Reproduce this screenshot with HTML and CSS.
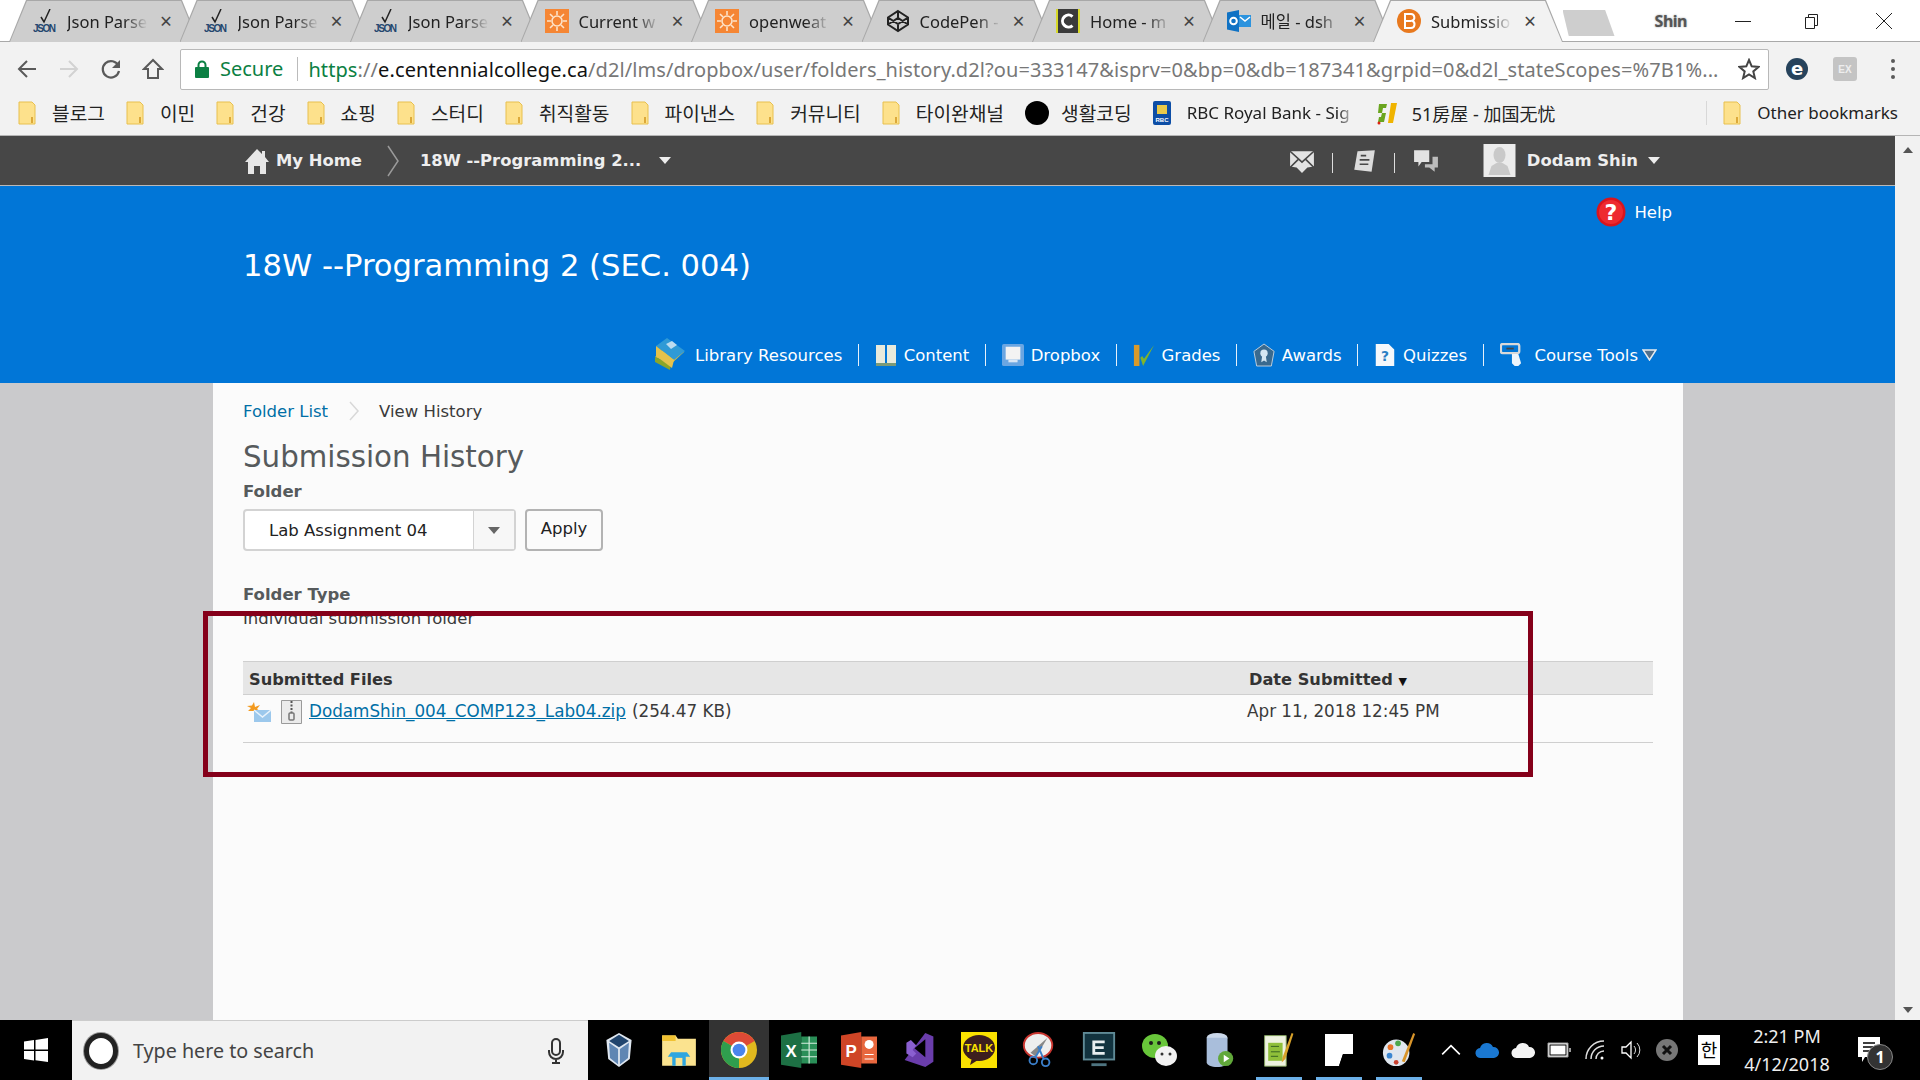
FILE: index.html
```html
<!DOCTYPE html>
<html lang="en">
<head>
    <meta charset="UTF-8">
    <title>Submission History</title>
    <link rel="stylesheet" href="styles.css">
</head>
<body>
    <svg class="sprite" xmlns="http://www.w3.org/2000/svg">
        <symbol id="i-folder" viewBox="0 0 18 24">
            <path d="M1 1h13l3 3v19H1z" fill="#fde18c" stroke="#e8c04f"/>
            <path d="M14 16v6" stroke="#dca93a" stroke-width="2"/>
        </symbol>
        <symbol id="i-json" viewBox="0 0 24 24">
            <path d="M8 8l3 5 6-13" fill="none" stroke="#222" stroke-width="1.500"/>
            <text x="0" y="23" font-size="10" font-weight="700" textLength="23" font-family="Liberation Sans" fill="#23466e">JSON</text>
        </symbol>
        <symbol id="i-sun" viewBox="0 0 24 24">
            <rect width="24" height="24" fill="#f58634"/>
            <circle cx="12" cy="12" r="5" fill="none" stroke="#fde3c8" stroke-width="1.600"/>
            <path d="M12 2v4M12 18v4M2 12h4M18 12h4M5 5l3 3M16 16l3 3M19 5l-3 3M8 16l-3 3" stroke="#fde3c8" stroke-width="1.600"/>
        </symbol>
    </svg>

    <div class="tabstrip">
        <div class="tab">
            <svg class="fav" viewBox="0 0 24 24"><use href="#i-json"/></svg>
            <span class="tab-title">Json Parse</span><span class="tab-x">×</span>
        </div>
        <div class="tab">
            <svg class="fav" viewBox="0 0 24 24"><use href="#i-json"/></svg>
            <span class="tab-title">Json Parse</span><span class="tab-x">×</span>
        </div>
        <div class="tab">
            <svg class="fav" viewBox="0 0 24 24"><use href="#i-json"/></svg>
            <span class="tab-title">Json Parse</span><span class="tab-x">×</span>
        </div>
        <div class="tab">
            <svg class="fav" viewBox="0 0 24 24"><use href="#i-sun"/></svg>
            <span class="tab-title">Current w</span><span class="tab-x">×</span>
        </div>
        <div class="tab">
            <svg class="fav" viewBox="0 0 24 24"><use href="#i-sun"/></svg>
            <span class="tab-title">openweat</span><span class="tab-x">×</span>
        </div>
        <div class="tab">
            <svg class="fav" viewBox="0 0 24 24"><path d="M12 2l10 6.500v7L12 22 2 15.500v-7zM2 8.500L12 15l10-6.500M2 15.500L12 9l10 6.500M12 2v7M12 15v7" fill="none" stroke="#222" stroke-width="2"/></svg>
            <span class="tab-title">CodePen -</span><span class="tab-x">×</span>
        </div>
        <div class="tab">
            <svg class="fav" viewBox="0 0 24 24"><rect width="24" height="24" fill="#3a3a3a"/><path d="M0 0h2v24H0zM22 0h2v24h-2z" fill="#d7d92a"/><path d="M16.500 7.500A6 6 0 1 0 16.500 16.500" fill="none" stroke="#fff" stroke-width="3"/></svg>
            <span class="tab-title">Home - m</span><span class="tab-x">×</span>
        </div>
        <div class="tab">
            <svg class="fav" viewBox="0 0 24 24"><path d="M12 1v22L0 20.500V3.500z" fill="#0f72c4"/><rect x="12" y="6" width="12" height="12" fill="#2c93de"/><path d="M13 8l5 4 5-4" fill="none" stroke="#fff" stroke-width="1.500"/><circle cx="6.500" cy="12" r="3.300" fill="none" stroke="#fff" stroke-width="2"/></svg>
            <span class="tab-title">메일 - dsh</span><span class="tab-x">×</span>
        </div>
        <div class="tab tab-active">
            <svg class="fav" viewBox="0 0 24 24"><circle cx="12" cy="12" r="12" fill="#e8791e"/><path d="M8 5h6a3.500 3.500 0 0 1 1 6.800A3.700 3.700 0 0 1 14 19H8zM8 12h6" fill="none" stroke="#fff" stroke-width="2"/></svg>
            <span class="tab-title">Submissio</span><span class="tab-x">×</span>
        </div>
        <div class="newtab"></div>
        <div class="window-controls">
            <span class="profile">Shin</span>
            <svg class="win-btn" viewBox="0 0 16 16"><path d="M0 8.500h16" stroke="#222"/></svg>
            <svg class="win-btn" viewBox="0 0 16 16"><path d="M1.500 4.500h9v11h-9zM4.500 4.500v-3h9v11h-3" fill="none" stroke="#222"/></svg>
            <svg class="win-btn" viewBox="0 0 16 16"><path d="M0 0l16 16M16 0L0 16" stroke="#222"/></svg>
        </div>
    </div>

    <div class="toolbar">
        <svg class="nav-icon" viewBox="0 0 22 22"><path d="M20 11H3M11 3l-8 8 8 8" fill="none" stroke="#5a5a5a" stroke-width="2"/></svg>
        <svg class="nav-icon" viewBox="0 0 22 22"><path d="M2 11h17M11 3l8 8-8 8" fill="none" stroke="#d2d2d2" stroke-width="2"/></svg>
        <svg class="nav-icon" viewBox="0 0 22 22"><path d="M18.500 8A8.200 8.200 0 1 0 19 13" fill="none" stroke="#5a5a5a" stroke-width="2.200"/><path d="M20 2v8h-8z" fill="#5a5a5a"/></svg>
        <svg class="nav-icon" viewBox="0 0 22 22"><path d="M11 2L2 11h4v9h10v-9h4z" fill="none" stroke="#5a5a5a" stroke-width="2"/></svg>
        <div class="omnibox">
            <svg class="lock" viewBox="0 0 14 18"><rect y="7" width="14" height="11" rx="1" fill="#0b8043"/><path d="M3.500 8V5a3.500 3.500 0 0 1 7 0v3" fill="none" stroke="#0b8043" stroke-width="2"/></svg>
            <span class="secure">Secure</span>
            <span class="url"><span class="url-green">https</span>://<span class="url-host">e.centennialcollege.ca</span>/d2l/lms/dropbox/user/folders_history.d2l?ou=333147&amp;isprv=0&amp;bp=0&amp;db=187341&amp;grpid=0&amp;d2l_stateScopes=%7B1%...</span>
            <svg class="star" viewBox="0 0 22 22"><path d="M11 2l2.700 6.300 6.800.6-5.200 4.500 1.600 6.700L11 16.500l-5.900 3.600 1.600-6.700L1.500 8.900l6.800-.6z" fill="none" stroke="#444" stroke-width="2"/></svg>
        </div>
        <svg class="ext" viewBox="0 0 24 24"><circle cx="12" cy="12" r="11" fill="#27435c"/><text x="12" y="18" text-anchor="middle" font-size="18" font-weight="700" font-family="DejaVu Sans" fill="#fff">e</text></svg>
        <svg class="ext" viewBox="0 0 24 24"><rect width="24" height="24" rx="3" fill="#c4c4c4"/><text x="12" y="16" text-anchor="middle" font-size="10" font-weight="700" font-family="Liberation Sans" fill="#eee">EX</text></svg>
        <svg class="ext" viewBox="0 0 24 24"><circle cx="12" cy="4" r="2" fill="#5a5a5a"/><circle cx="12" cy="12" r="2" fill="#5a5a5a"/><circle cx="12" cy="20" r="2" fill="#5a5a5a"/></svg>
    </div>

    <div class="bookmarks">
        <div class="bm bm-ko"><svg class="bm-icon"><use href="#i-folder"/></svg>블로그</div>
        <div class="bm bm-ko"><svg class="bm-icon"><use href="#i-folder"/></svg>이민</div>
        <div class="bm bm-ko"><svg class="bm-icon"><use href="#i-folder"/></svg>건강</div>
        <div class="bm bm-ko"><svg class="bm-icon"><use href="#i-folder"/></svg>쇼핑</div>
        <div class="bm bm-ko"><svg class="bm-icon"><use href="#i-folder"/></svg>스터디</div>
        <div class="bm bm-ko"><svg class="bm-icon"><use href="#i-folder"/></svg>취직활동</div>
        <div class="bm bm-ko"><svg class="bm-icon"><use href="#i-folder"/></svg>파이낸스</div>
        <div class="bm bm-ko"><svg class="bm-icon"><use href="#i-folder"/></svg>커뮤니티</div>
        <div class="bm bm-ko"><svg class="bm-icon"><use href="#i-folder"/></svg>타이완채널</div>
        <div class="bm bm-ko"><svg class="bm-icon bm-icon-round" viewBox="0 0 24 24"><circle cx="12" cy="12" r="12" fill="#000"/></svg>생활코딩</div>
        <div class="bm"><svg class="bm-icon" viewBox="0 0 18 24"><rect width="18" height="24" rx="2" fill="#0d4ea6"/><path d="M4 4h10v9H4z" fill="#e9c94a"/><text x="9" y="21" text-anchor="middle" font-size="6" font-weight="700" font-family="Liberation Sans" fill="#fff">RBC</text></svg><span class="bm-fade">RBC Royal Bank - Sig</span></div>
        <div class="bm bm-cn"><svg class="bm-icon bm-icon-round" viewBox="0 0 24 24"><path d="M3 3h8l-1 4H7l-1 5h4l-2 9H2l1-5h2l1-4H2z" fill="#6aa51f"/><path d="M15 2h6l-4 20h-5z" fill="#f0b400"/><circle cx="3" cy="22" r="1.500" fill="#d21"/></svg>51房屋 - 加国无忧</div>
        <div class="bm bm-other"><svg class="bm-icon"><use href="#i-folder"/></svg>Other bookmarks</div>
    </div>

    <div class="page">
        <div class="page-main">
            <div class="minibar">
                <div class="minibar-left">
                    <svg class="home-icon" viewBox="0 0 24 26"><path d="M12 1l5 5V3h3v6l4 5h-3v12h-6v-8H9v8H3V14H0z" fill="#e6e6e6"/></svg>
                    <span class="minibar-link">My Home</span>
                    <svg class="crumb-chevron" viewBox="0 0 14 32"><path d="M2 1l10 15L2 31" fill="none" stroke="#9a9a9a" stroke-width="1.500"/></svg>
                    <span class="minibar-link">18W --Programming 2...</span>
                    <span class="caret"></span>
                </div>
                <div class="minibar-right">
                    <svg class="mini-icon" viewBox="0 0 24 24"><path d="M1 3h22v14l-6 1-5 5-5-5-6-1z" fill="#e3e3e3"/><path d="M1 3l11 10L23 3M1 18l8-8M23 18l-8-8" fill="none" stroke="#474747" stroke-width="1.500"/></svg>
                    <span class="mini-sep"></span>
                    <svg class="mini-icon" viewBox="0 0 24 24"><path d="M6 3l16-1-3 20-16-2z" fill="#dcdcdc"/><path d="M9 7h5M8 11h9M8 15h8" stroke="#474747" stroke-width="1.500"/></svg>
                    <span class="mini-sep"></span>
                    <svg class="mini-icon" viewBox="0 0 24 24"><path d="M1 2h14v11H8l-3 4v-4H1z" fill="#e3e3e3"/><path d="M18 8h5v10h-3v4l-5-4h-4v-3h7z" fill="#bdbdbd"/></svg>
                    <div class="avatar"><svg viewBox="0 0 32 33"><rect width="32" height="33" fill="#ececec"/><ellipse cx="16" cy="11" rx="6" ry="8" fill="#c9c9c9"/><path d="M5 31l3-9 5-3h6l5 3 3 9z" fill="#c9c9c9"/></svg></div>
                    <span class="minibar-link user-name">Dodam Shin</span>
                    <span class="caret"></span>
                </div>
            </div>

            <div class="banner">
                <div class="help-row">
                    <svg class="help-icon" viewBox="0 0 30 30"><circle cx="15" cy="15" r="14.500" fill="#d9151d"/><circle cx="15" cy="15" r="12" fill="#ee2a2f"/><text x="15" y="23" text-anchor="middle" font-size="22" font-weight="700" font-family="DejaVu Sans" fill="#fff">?</text></svg>
                    <span>Help</span>
                </div>
                <h1 class="course-title">18W --Programming 2 (SEC. 004)</h1>
                <div class="course-nav">
                    <div class="nav-item">
                        <svg class="nav-img nav-img-lib" viewBox="0 0 34 36"><path d="M2 20l16 7 13-12-16-7z" fill="#e9bf2d"/><path d="M2 20v5l15 8 1-6z" fill="#8aa52a"/><path d="M3 9L14 1l18 13-11 9z" fill="#2f9ad6"/><path d="M3 9v10l16 12 2-8z" fill="#e4c24d"/><path d="M13 7l6-3 5 4-6 4z" fill="#bcdcf0"/></svg>
                        Library Resources
                    </div>
                    <div class="nav-item">
                        <svg class="nav-img" viewBox="0 0 22 24"><path d="M1 2h9v18H1zM12 2h9v18h-9z" fill="#e8eadc"/><path d="M1 20h20v3H1z" fill="#7b9a78"/></svg>
                        Content
                    </div>
                    <div class="nav-item">
                        <svg class="nav-img" viewBox="0 0 24 24"><rect width="24" height="24" rx="2" fill="#6aa6e2"/><rect x="4" y="3" width="16" height="14" fill="#f3f3f3"/><path d="M7 17h10v3H7z" fill="#d8e6f5"/></svg>
                        Dropbox
                    </div>
                    <div class="nav-item">
                        <svg class="nav-img" viewBox="0 0 24 24"><path d="M1 1h6v23H1z" fill="#d99a2b"/><path d="M8 15l3 9L23 1l-11 15-2-3z" fill="#7fb32e"/></svg>
                        Grades
                    </div>
                    <div class="nav-item">
                        <svg class="nav-img" viewBox="0 0 24 26"><path d="M12 1l11 8-3 16H4L1 9z" fill="#3a6a8f" stroke="#c9d4de"/><circle cx="12" cy="11" r="4" fill="#d5e7f3"/><path d="M10 14l-1 7 3-2 3 2-1-7z" fill="#d5e7f3"/></svg>
                        Awards
                    </div>
                    <div class="nav-item">
                        <svg class="nav-img" viewBox="0 0 22 26"><path d="M1 1h14l6 6v18H1z" fill="#f5f8fb"/><text x="11" y="20" text-anchor="middle" font-size="15" font-weight="700" font-family="DejaVu Sans" fill="#2b7fc4">?</text></svg>
                        Quizzes
                    </div>
                    <div class="nav-item nav-item-last">
                        <svg class="nav-img nav-img-tools" viewBox="0 0 24 26"><rect x="1" y="1" width="20" height="10" rx="2" fill="none" stroke="#d8d8d8" stroke-width="2.500"/><path d="M7 6h8" stroke="#444" stroke-width="2"/><path d="M13 12h7l3 10-3 3h-4l-3-3z" fill="#eef5fb"/></svg>
                        Course Tools
                        <svg class="tools-caret" viewBox="0 0 15 12"><path d="M1 1h13l-6.500 10z" fill="#50708c" stroke="#e8ecef" stroke-width="1.500"/></svg>
                    </div>
                </div>
            </div>

            <div class="backdrop">
                <div class="content">
                    <div class="crumbs">
                        <a class="link">Folder List</a>
                        <svg class="crumb-sep" viewBox="0 0 10 20"><path d="M1 1l8 9-8 9" fill="none" stroke="#d8d8d8" stroke-width="1.500"/></svg>
                        <span>View History</span>
                    </div>
                    <h2 class="page-title">Submission History</h2>
                    <div class="field-label">Folder</div>
                    <div class="folder-form">
                        <div class="select-box">
                            <span class="select-value">Lab Assignment 04</span>
                            <span class="select-arrow"><span class="select-caret"></span></span>
                        </div>
                        <div class="apply-btn">Apply</div>
                    </div>
                    <div class="field-label folder-type">Folder Type</div>
                    <div class="field-value">Individual submission folder</div>
                    <table class="files">
                        <tr>
                            <th class="col-file">Submitted Files</th>
                            <th>Date Submitted <span class="sort">▼</span></th>
                        </tr>
                        <tr>
                            <td>
                                <div class="file-cell">
                                    <svg class="file-icon" viewBox="0 0 24 20"><path d="M7 0l1 5 5-2-3 4 3 2H1l3-3-4-2 5-.5z" fill="#f39a1f"/><rect x="7" y="8" width="17" height="12" fill="#9cc8ec"/><path d="M7 8l8.500 7L24 8" fill="none" stroke="#e8f2fb" stroke-width="1.500"/></svg>
                                    <svg class="file-icon zip-icon" viewBox="0 0 21 24"><path d="M.5.500h20v23H.5z" fill="#ebebeb" stroke="#9a9a9a"/><path d="M10.500 1v12" stroke="#555" stroke-width="2" stroke-dasharray="2 1.500"/><rect x="8" y="13" width="5" height="7" rx="1" fill="none" stroke="#777" stroke-width="1.500"/></svg>
                                    <a class="link file-link">DodamShin_004_COMP123_Lab04.zip</a>
                                    <span class="file-size">(254.47 KB)</span>
                                </div>
                            </td>
                            <td class="date-cell">Apr 11, 2018 12:45 PM</td>
                        </tr>
                    </table>
                </div>
            </div>
        </div>
        <div class="scrollbar">
            <span class="scroll-up"></span>
            <span class="scroll-down"></span>
        </div>
        <div class="highlight-box"></div>
    </div>

    <div class="taskbar">
        <svg class="start" viewBox="0 0 24 24"><path d="M0 3.500l10-1.400V11.500H0zM11.500 1.900L24 0v11.500H11.500zM0 13h10v9.400L0 21zM11.500 13H24v11l-12.500-1.800z" fill="#fff"/></svg>
        <div class="search">
            <span class="cortana"></span>
            <span class="search-text">Type here to search</span>
            <svg class="mic" viewBox="0 0 16 26"><rect x="4" y="1" width="8" height="16" rx="4" fill="none" stroke="#333" stroke-width="2"/><path d="M1 12v2a7 7 0 0 0 14 0v-2M8 21v4M4 25h8" fill="none" stroke="#333" stroke-width="2"/></svg>
        </div>
        <div class="task-apps">
            <div class="app"><svg viewBox="0 0 32 40"><path d="M16 1l14 8-2 21-12 9-12-9L2 9z" fill="#dfe7f0"/><path d="M16 3l11 7-11 7-11-7z" fill="#21456e"/><path d="M5 12l10 7v17l-9-7zM27 12l-10 7v17l9-7z" fill="#5f86b3"/></svg></div>
            <div class="app"><svg viewBox="0 0 32 32"><path d="M1 3h12l2 3h16v24H1z" fill="#fbe38f"/><path d="M1 3h12v5H1z" fill="#f1c232"/><path d="M9 18h14l3 4h-4v8H10v-8H6z" fill="#2ea6e0"/><rect x="13" y="23" width="6" height="7" fill="#fbe38f"/></svg></div>
            <div class="app app-running app-active"><svg viewBox="0 0 34 34"><circle cx="17" cy="17" r="17" fill="#e0b81e"/><path d="M17 17L2.300 8.500A17 17 0 0 1 31.700 8.500z" fill="#dd4a36"/><path d="M17 17L2.300 8.500A17 17 0 0 0 17 34z" fill="#2f9e4e"/><circle cx="17" cy="17" r="8" fill="#fff"/><circle cx="17" cy="17" r="6" fill="#4a85ec"/></svg></div>
            <div class="app"><svg viewBox="0 0 32 32"><path d="M0 3l18-3v32L0 29z" fill="#1d7044"/><rect x="18" y="4" width="14" height="24" fill="#2a8f58"/><path d="M18 10h14M18 16h14M18 22h14M25 4v24" stroke="#d8eee0"/><text x="9" y="22" text-anchor="middle" font-size="15" font-weight="700" font-family="Liberation Sans" fill="#fff">X</text></svg></div>
            <div class="app"><svg viewBox="0 0 32 32"><path d="M0 3l18-3v32L0 29z" fill="#cf4526"/><rect x="18" y="4" width="14" height="24" fill="#e8673e"/><path d="M21 20h8M21 24h8" stroke="#fff"/><circle cx="25" cy="11" r="4" fill="#fff"/><text x="9" y="22" text-anchor="middle" font-size="15" font-weight="700" font-family="Liberation Sans" fill="#fff">P</text></svg></div>
            <div class="app"><svg viewBox="0 0 34 40"><path d="M24 1l9 4v28l-9 6-23-8z" fill="#6a3dab"/><path d="M24 8v20L12 18z" fill="#000"/><path d="M3 12l5-3 6 6-4 5 4 4-4 4-7-4z" fill="#8a5fd0"/></svg></div>
            <div class="app"><svg viewBox="0 0 36 36"><rect width="36" height="36" fill="#fae100"/><ellipse cx="18" cy="16" rx="16" ry="13" fill="#3c1e1e"/><path d="M11 26l-2 7 8-5z" fill="#3c1e1e"/><text x="18" y="20" text-anchor="middle" font-size="11" font-weight="700" font-family="Liberation Sans" fill="#fae100">TALK</text></svg></div>
            <div class="app"><svg viewBox="0 0 34 38"><ellipse cx="16" cy="14" rx="15" ry="13" fill="#eee" stroke="#c9352f" stroke-width="2"/><path d="M8 22L26 6l-12 20" fill="#888"/><circle cx="11" cy="30" r="4" fill="none" stroke="#3a7ec9" stroke-width="2"/><circle cx="24" cy="32" r="4" fill="none" stroke="#3a7ec9" stroke-width="2"/><path d="M13 27l7-12M22 29l-6-14" stroke="#3a7ec9" stroke-width="2"/></svg></div>
            <div class="app"><svg viewBox="0 0 34 38"><rect x="1" y="1" width="32" height="28" fill="#12333f" stroke="#5f8a96" stroke-width="2"/><path d="M10 9h13v3H13v3h9v3h-9v3h10v3H10z" fill="#e8eef0"/><path d="M9 33h16v3H9z" fill="#4e7480"/></svg></div>
            <div class="app"><svg viewBox="0 0 36 36"><ellipse cx="14" cy="14" rx="13" ry="12" fill="#68c63a"/><circle cx="10" cy="11" r="2" fill="#1c1c1c"/><circle cx="18" cy="11" r="2" fill="#1c1c1c"/><ellipse cx="25" cy="24" rx="11" ry="10" fill="#f2f2f2"/><circle cx="21" cy="22" r="1.500" fill="#333"/><circle cx="29" cy="22" r="1.500" fill="#333"/></svg></div>
            <div class="app"><svg viewBox="0 0 30 38"><ellipse cx="13" cy="6" rx="11" ry="5" fill="#cbd8ea"/><path d="M2 6v26c0 3 5 5 11 5s11-2 11-5V6z" fill="#a9bedb"/><circle cx="22" cy="28" r="8" fill="#61a83a"/><path d="M20 24l6 4-6 4z" fill="#fff"/></svg></div>
            <div class="app app-running"><svg viewBox="0 0 34 40"><path d="M1 4h24v34H1z" fill="#eef2e0" stroke="#86a65c"/><rect x="5" y="12" width="16" height="20" fill="#8fbf3a"/><path d="M8 16h9M8 22h10M8 27h8" stroke="#2f5a1f"/><path d="M31 1l2 1-9 28-4 4 1-6z" fill="#d9a32a"/></svg></div>
            <div class="app app-running"><svg class="sticky" viewBox="0 0 28 32"><rect width="28" height="32" fill="#fff"/><path d="M28 20v12H14l4-12z" fill="#000"/><path d="M18 20h10L14 32z" fill="#000"/></svg></div>
            <div class="app app-running"><svg viewBox="0 0 36 38"><ellipse cx="15" cy="22" rx="14" ry="14" fill="#dfe6ef"/><circle cx="9" cy="16" r="3" fill="#e8732a"/><circle cx="17" cy="12" r="3" fill="#4ca64c"/><circle cx="8" cy="25" r="3" fill="#3b86d1"/><circle cx="15" cy="32" r="2.500" fill="#c8402f"/><path d="M33 1l2 1-11 30-3-1z" fill="#d9952a"/></svg></div>
        </div>
        <div class="tray">
            <svg class="tray-icon" viewBox="0 0 20 20"><path d="M2 14l8-8 8 8" fill="none" stroke="#fff" stroke-width="1.500"/></svg>
            <svg class="tray-icon" viewBox="0 0 24 20"><path d="M6 18a5 5 0 0 1-1-10 7 7 0 0 1 13-1 5.500 5.500 0 0 1 1 11z" fill="#1a78d2"/></svg>
            <svg class="tray-icon" viewBox="0 0 24 20"><path d="M6 18a5 5 0 0 1-1-10 7 7 0 0 1 13-1 5.500 5.500 0 0 1 1 11z" fill="#f3f3f3"/></svg>
            <svg class="tray-icon" viewBox="0 0 24 20"><path d="M1 3h20v14H1z" fill="#fff" stroke="#999"/><rect x="3" y="5" width="16" height="10" fill="#fff" stroke="#000"/><path d="M22 8h2v4h-2z" fill="#999"/></svg>
            <svg class="tray-icon" viewBox="0 0 22 22"><path d="M2 20A18 18 0 0 1 20 2M7 20A13 13 0 0 1 20 7M12 20a8 8 0 0 1 8-8" fill="none" stroke="#ddd" stroke-width="1.500"/><circle cx="18" cy="19" r="1.500" fill="#fff"/></svg>
            <svg class="tray-icon" viewBox="0 0 22 22"><path d="M2 8h4l5-5v16l-5-5H2z" fill="none" stroke="#fff" stroke-width="1.300"/><path d="M14 7a6 6 0 0 1 0 8M17 4a10 10 0 0 1 0 14" fill="none" stroke="#ddd"/></svg>
            <svg class="tray-icon" viewBox="0 0 22 22"><circle cx="11" cy="11" r="11" fill="#777"/><path d="M7 7l8 8M15 7l-8 8" stroke="#111" stroke-width="3"/></svg>
            <span class="ime">한</span>
            <div class="clock"><span>2:21 PM</span><span>4/12/2018</span></div>
            <div class="notif">
                <svg viewBox="0 0 24 28"><path d="M1 1h22v20H8l-3 5v-5H1z" fill="#fff"/><path d="M6 7h12M6 11h12M6 15h8" stroke="#000" stroke-width="1.300"/></svg>
                <span class="notif-badge">1</span>
            </div>
        </div>
    </div>
</body>
</html>
```
FILE: styles.css
```css
* {
    box-sizing: border-box;
}
html, body {
    height: 100%;
}
body {
    margin: 0;
    display: flex;
    flex-direction: column;
    height: 1080px;
    overflow: hidden;
    background: #fff;
    font-family: "DejaVu Sans", Verdana, sans-serif;
    color: #3a3a3a;
}
.sprite {
    display: none;
}

/* browser chrome */
.tabstrip {
    height: 42px;
    display: flex;
    padding-left: 9px;
    background: #fff;
    font-family: "Noto Sans", "Noto Sans CJK KR", sans-serif;
    font-size: 16.5px;
    position: relative;
}
.tabstrip::after {
    content: "";
    position: absolute;
    left: 0;
    right: 0;
    bottom: 0;
    height: 1px;
    background: #a9a9a9;
}
.tab {
    position: relative;
    flex: none;
    width: 190px;
    margin-right: -19.5px;
    display: flex;
    align-items: center;
    padding: 0 0 0 24px;
    background: #a8a8a8;
    clip-path: polygon(0 100%, 17px 0, calc(100% - 17px) 0, 100% 100%);
    z-index: 1;
}
.tab::before {
    content: "";
    position: absolute;
    inset: 1px 0 0 0;
    background: #cecece;
    clip-path: polygon(1px 100%, 18px 0, calc(100% - 18px) 0, calc(100% - 1px) 100%);
}
.tab > * {
    position: relative;
}
.tab-active {
    z-index: 2;
}
.tab-active::before {
    background: #f2f2f2;
}
.fav {
    flex: none;
    width: 24px;
    height: 24px;
    margin-right: 10px;
}
.tab-title {
    flex: none;
    width: 81px;
    white-space: nowrap;
    overflow: hidden;
    color: #222;
    -webkit-mask-image: linear-gradient(90deg, #000 70%, transparent 100%);
    mask-image: linear-gradient(90deg, #000 70%, transparent 100%);
}
.tab-x {
    margin-left: 12px;
    font-size: 21px;
    line-height: 1;
    color: #444;
}
.newtab {
    width: 52px;
    height: 26px;
    margin: 10px 0 0 19px;
    flex: none;
    background: #cecece;
    clip-path: polygon(0 0, 82% 0, 100% 100%, 12% 100%);
}
.window-controls {
    margin-left: auto;
    display: flex;
    align-items: center;
    height: 41px;
    padding-right: 28px;
}
.profile {
    margin-right: 48px;
    font-weight: 700;
    font-size: 16px;
    letter-spacing: -0.5px;
    color: #555;
    text-shadow: 0 0 2px #999;
}
.win-btn {
    width: 16px;
    height: 16px;
    margin-left: 53px;
}
.win-btn:first-of-type {
    margin-left: 0;
}
.win-btn:last-child {
    margin-left: 56px;
}

.toolbar {
    height: 54px;
    display: flex;
    align-items: center;
    background: #f2f2f2;
    padding-left: 16px;
}
.nav-icon {
    flex: none;
    width: 22px;
    height: 22px;
    margin-right: 20px;
}
.omnibox {
    flex: none;
    width: 1589px;
    height: 41px;
    margin-left: -4px;
    margin-right: 16px;
    display: flex;
    align-items: center;
    background: #fff;
    border: 1px solid #b8b8b8;
    border-radius: 2px;
    padding-left: 14px;
    font-family: "Noto Sans", sans-serif;
    font-size: 20px;
}
.lock {
    width: 14px;
    height: 18px;
    margin-right: 11px;
}
.secure {
    color: #0b8043;
    padding-right: 14px;
    margin-right: 10px;
    border-right: 1px solid #bbb;
    line-height: 24px;
    font-size: 20px;
}
.url {
    color: #777;
    white-space: nowrap;
    overflow: hidden;
    flex: 1;
    letter-spacing: 0.1px;
}
.url-green {
    color: #0b8043;
}
.url-host {
    color: #111;
}
.star {
    width: 22px;
    height: 22px;
    margin: 0 8px 0 10px;
    flex: none;
}
.ext {
    flex: none;
    width: 24px;
    height: 24px;
    margin-right: 24px;
}

.bookmarks {
    height: 40px;
    display: flex;
    align-items: center;
    background: #f2f2f2;
    padding: 0 0 6px 18px;
    font-family: "Noto Sans", "Noto Sans CJK KR", sans-serif;
    font-size: 17px;
    color: #222;
    border-bottom: 1px solid #b5b5b5;
}
.bm {
    display: flex;
    align-items: center;
    margin-right: 21px;
    white-space: nowrap;
}
.bm-ko {
    font-size: 19.2px;
}
.bm-cn {
    font-size: 18px;
}
.bm-icon {
    flex: none;
    width: 18px;
    height: 24px;
    margin-right: 16px;
}
.bm-icon-round {
    width: 24px;
    margin-right: 12px;
}
.bm-fade {
    width: 168px;
    overflow: hidden;
    -webkit-mask-image: linear-gradient(90deg, #000 90%, transparent 100%);
    mask-image: linear-gradient(90deg, #000 90%, transparent 100%);
}
.bm-other {
    margin-left: auto;
    margin-right: 22px;
    padding-left: 16px;
    border-left: 1px solid #d8d8d8;
}

/* page */
.page {
    flex: 1;
    display: flex;
    min-height: 0;
    position: relative;
}
.page-main {
    flex: 1;
    display: flex;
    flex-direction: column;
    min-width: 0;
}
.scrollbar {
    flex: none;
    width: 25px;
    background: #f1f1f1;
    display: flex;
    flex-direction: column;
    justify-content: space-between;
    align-items: center;
    padding: 11px 0 7px;
}
.scroll-up {
    border: 5px solid transparent;
    border-top: 0;
    border-bottom: 6px solid #555;
}
.scroll-down {
    border: 5px solid transparent;
    border-bottom: 0;
    border-top: 6px solid #555;
}

.minibar {
    height: 50px;
    display: flex;
    align-items: center;
    justify-content: space-between;
    background: #474747;
    border-bottom: 1px solid #b9b9b9;
    padding: 0 235px 0 245px;
}
.minibar-left, .minibar-right {
    display: flex;
    align-items: center;
}
.minibar-link {
    font-weight: 700;
    font-size: 16.4px;
    color: #eee;
    white-space: nowrap;
}
.home-icon {
    width: 24px;
    height: 26px;
    margin-right: 7px;
}
.crumb-chevron {
    width: 14px;
    height: 32px;
    margin: 0 20px 0 24px;
}
.caret {
    width: 0;
    height: 0;
    margin-left: 18px;
    border: 6px solid transparent;
    border-bottom: 0;
    border-top: 7px solid #eee;
}
.minibar-right .caret {
    margin-left: 10px;
}
.mini-icon {
    width: 26px;
    height: 26px;
}
.mini-sep {
    width: 1px;
    height: 20px;
    background: #ddd;
    margin: 4px 18px 0 17px;
}
.avatar {
    width: 33px;
    height: 33px;
    margin: 0 11px 0 44px;
}
.avatar svg {
    display: block;
    width: 100%;
    height: 100%;
}

.banner {
    height: 197px;
    flex: none;
    display: flex;
    flex-direction: column;
    background: #0176d7;
    color: #fff;
    padding: 11px 223px 0 243px;
}
.help-row {
    display: flex;
    justify-content: flex-end;
    align-items: center;
    gap: 8px;
    height: 30px;
    font-size: 16.5px;
}
.help-icon {
    width: 30px;
    height: 30px;
}
.course-title {
    margin: 19px 0 0;
    font-size: 30.6px;
    font-weight: 400;
    line-height: 40px;
}
.course-nav {
    margin-top: auto;
    margin-right: 15px;
    height: 56px;
    display: flex;
    justify-content: flex-end;
    align-items: center;
    font-size: 16.5px;
    white-space: nowrap;
}
.nav-item {
    display: flex;
    align-items: center;
    height: 22px;
    padding: 0 15.7px;
    border-right: 1px solid #e6f0fa;
}
.nav-item-last {
    border-right: 0;
    padding-right: 0;
}
.nav-img {
    width: 22px;
    height: 24px;
    margin-right: 7px;
    flex: none;
}
.nav-img-lib {
    width: 36px;
    height: 36px;
}
.nav-img-tools {
    margin-right: 13px;
}
.tools-caret {
    width: 15px;
    height: 12px;
    margin-left: 4px;
}

.backdrop {
    flex: 1;
    display: flex;
    background: #cacacc;
    padding-left: 213px;
    min-height: 0;
}
.content {
    width: 1470px;
    background: #fbfbfb;
    padding: 18px 30px 0;
    font-size: 16.5px;
}
.crumbs {
    display: flex;
    align-items: center;
    height: 20px;
}
.crumb-sep {
    width: 10px;
    height: 20px;
    margin: 0 20px 0 21px;
}
.link {
    color: #006fa6;
}
.page-title {
    margin: 16px 0 0;
    font-size: 29.3px;
    font-weight: 400;
    line-height: 40px;
    color: #565a5c;
}
.field-label {
    margin-top: 5px;
    line-height: 20px;
    font-weight: 700;
    color: #565a5c;
}
.folder-form {
    display: flex;
    margin-top: 7px;
    height: 42px;
    color: #222;
}
.select-box {
    width: 273px;
    display: flex;
    background: #fff;
    border: 2px solid #d3d3d3;
    border-radius: 4px;
}
.select-value {
    flex: 1;
    padding-left: 24px;
    line-height: 40px;
}
.select-arrow {
    width: 41px;
    display: flex;
    align-items: center;
    justify-content: center;
    background: #f7f7f7;
    border-left: 1px solid #d3d3d3;
}
.select-caret {
    border: 6px solid transparent;
    border-bottom: 0;
    border-top: 7px solid #666;
}
.apply-btn {
    width: 78px;
    margin-left: 9px;
    text-align: center;
    line-height: 36px;
    background: #fbfbfb;
    border: 2px solid #b3b3b3;
    border-radius: 4px;
}
.folder-form + .folder-type {
    margin-top: 34px;
}
.field-value {
    margin-top: 4px;
    line-height: 20px;
}
.files {
    width: 1410px;
    margin-top: 32px;
    border-collapse: collapse;
    table-layout: fixed;
}
.files th {
    height: 33px;
    padding: 2px 0 0 6px;
    text-align: left;
    font-size: 16.2px;
    background: #e6e6e6;
    border-top: 1px solid #cfcfcf;
    border-bottom: 1px solid #cfcfcf;
    color: #333;
}
.col-file {
    width: 1000px;
}
.sort {
    font-size: 11px;
    color: #111;
}
.files td {
    height: 48px;
    padding: 4px 0 0;
    vertical-align: top;
    font-size: 16.8px;
    line-height: 24px;
    border-bottom: 1px solid #cfcfcf;
}
.file-cell {
    display: flex;
    align-items: flex-start;
    padding-left: 4px;
    white-space: nowrap;
}
.file-icon {
    flex: none;
    width: 24px;
    height: 20px;
    margin: 3px 10px 0 0;
}
.zip-icon {
    width: 21px;
    height: 24px;
    margin: 1px 7px 0 0;
}
.file-link {
    text-decoration: underline;
}
.file-size {
    margin-left: 6px;
}
.files .date-cell {
    padding-left: 4px;
}

/* annotation drawn on top of the screenshot */
.highlight-box {
    position: absolute;
    left: 203px;
    top: 475px;
    width: 1330px;
    height: 166px;
    border: 5px solid #85001a;
    pointer-events: none;
}

/* windows taskbar */
.taskbar {
    flex: none;
    height: 60px;
    display: flex;
    align-items: center;
    background: #000;
    font-family: "Noto Sans", "Noto Sans CJK KR", sans-serif;
}
.start {
    flex: none;
    width: 24px;
    height: 24px;
    margin: 0 24px;
}
.search {
    flex: none;
    width: 516px;
    height: 60px;
    display: flex;
    align-items: center;
    background: #f2f2f2;
    padding-left: 12px;
    border-top: 1px solid #ccc;
}
.cortana {
    flex: none;
    width: 34px;
    height: 36px;
    border: 5px solid #222;
    border-radius: 50%;
    box-shadow: 0 0 0 1px #999;
    background: #fff;
}
.search-text {
    margin-left: 15px;
    font-size: 19.7px;
    color: #444;
    flex: 1;
}
.mic {
    width: 16px;
    height: 26px;
    margin-right: 24px;
}
.task-apps {
    display: flex;
    height: 60px;
    flex: none;
    padding-left: 1px;
}
.app {
    position: relative;
    width: 60px;
    height: 60px;
    display: flex;
    align-items: center;
    justify-content: center;
}
.app svg {
    width: 36px;
    height: 36px;
}
.app svg.sticky {
    width: 28px;
    height: 32px;
}
.app-running::after {
    content: "";
    position: absolute;
    left: 7px;
    right: 7px;
    bottom: 0;
    height: 3px;
    background: #6cb0e8;
}
.app-active {
    background: #333;
}
.app-active::after {
    left: 0;
    right: 0;
}
.tray {
    flex: 1;
    display: flex;
    align-items: center;
    height: 60px;
    padding-left: 10px;
    color: #eee;
}
.tray-icon {
    flex: none;
    width: 24px;
    height: 22px;
    margin-right: 12px;
}
.ime {
    flex: none;
    width: 22px;
    height: 30px;
    margin-left: 7px;
    text-align: center;
    line-height: 30px;
    font-size: 18px;
    background: #fff;
    color: #000;
}
.clock {
    width: 118px;
    margin-left: 8px;
    display: flex;
    flex-direction: column;
    align-items: center;
    gap: 6px;
    font-size: 18px;
    line-height: 22px;
}
.notif {
    position: relative;
    width: 24px;
    height: 28px;
    margin-left: 11px;
}
.notif svg {
    display: block;
    width: 24px;
    height: 28px;
}
.notif-badge {
    position: absolute;
    left: 10px;
    top: 8px;
    width: 26px;
    height: 26px;
    border-radius: 50%;
    background: #333;
    border: 1px solid #888;
    text-align: center;
    line-height: 24px;
    font-size: 16px;
    font-weight: 700;
    color: #fff;
}
```
